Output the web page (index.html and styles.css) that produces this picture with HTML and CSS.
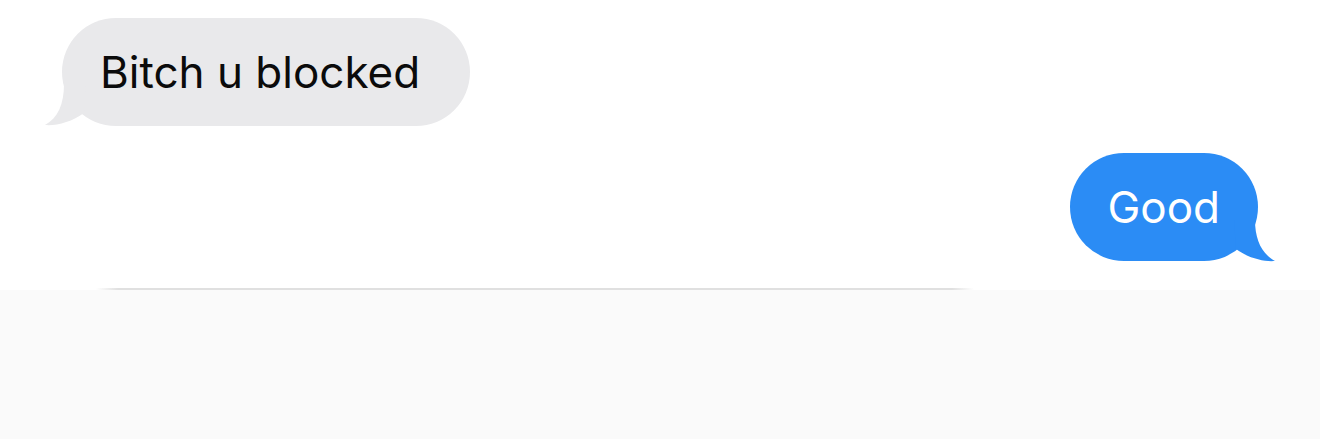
FILE: index.html
```html
<!DOCTYPE html>
<html lang="en">
<head>
<meta charset="utf-8">
<title>Messages</title>
<link rel="stylesheet" href="styles.css">
</head>
<body>
  <main class="thread">
    <div class="row row-in">
      <div class="bubble bubble-in">
        Bitch u blocked
        <svg class="tail tail-in" width="44" height="44" viewBox="0 0 44 44" aria-hidden="true">
          <path d="M22 0 C22 20 16 34 3 41 C14 42 30 38 42 29 L44 0 Z"/>
        </svg>
      </div>
    </div>
    <div class="row row-out">
      <div class="bubble bubble-out">
        Good
        <svg class="tail tail-out" width="44" height="44" viewBox="0 0 44 44" aria-hidden="true">
          <path d="M21 0 C21 20 28 34 41 41 C30 42 14 38 2 29 L0 0 Z"/>
        </svg>
      </div>
    </div>
  </main>
  <footer class="composer">
    <div class="field"></div>
  </footer>
</body>
</html>
```

FILE: styles.css
```css
* {
  box-sizing: border-box;
}

html, body {
  margin: 0;
  padding: 0;
}

body {
  width: 1320px;
  height: 439px;
  overflow: hidden;
  background: #ffffff;
  font-family: Inter, "Liberation Sans", Arial, sans-serif;
  display: flex;
  flex-direction: column;
}

.thread {
  height: 290px;
  padding-top: 18px;
  display: flex;
  flex-direction: column;
  gap: 27px;
}

.row {
  display: flex;
}

.row-in {
  justify-content: flex-start;
  padding-left: 62px;
}

.row-out {
  justify-content: flex-end;
  padding-right: 62px;
}

.bubble {
  position: relative;
  height: 108px;
  line-height: 108px;
  border-radius: 54px;
  font-size: 44px;
  white-space: nowrap;
}

.bubble-in {
  background: #e9e9eb;
  color: #0b0b0b;
  padding: 0 50px 0 38px;
}

.bubble-out {
  background: #2b8cf5;
  color: #ffffff;
  padding: 0 38px 0 37px;
}

/* speech-bubble tails hang off the bottom corners */
.tail {
  position: absolute;
  display: block;
}

.tail-in {
  left: -20px;
  top: 66px;
  fill: #e9e9eb;
}

.tail-out {
  right: -20px;
  top: 67px;
  fill: #2b8cf5;
}

.composer {
  flex: 1;
  background: #fafafa;
  padding-left: 96px;
}

/* top edge of the text field, softened at both ends */
.field {
  width: 878px;
  height: 2px;
  margin-top: -2px;
  background: linear-gradient(to right,
    rgba(224, 224, 224, 0) 0,
    #e0e0e0 22px,
    #e0e0e0 calc(100% - 22px),
    rgba(224, 224, 224, 0) 100%);
}
```
